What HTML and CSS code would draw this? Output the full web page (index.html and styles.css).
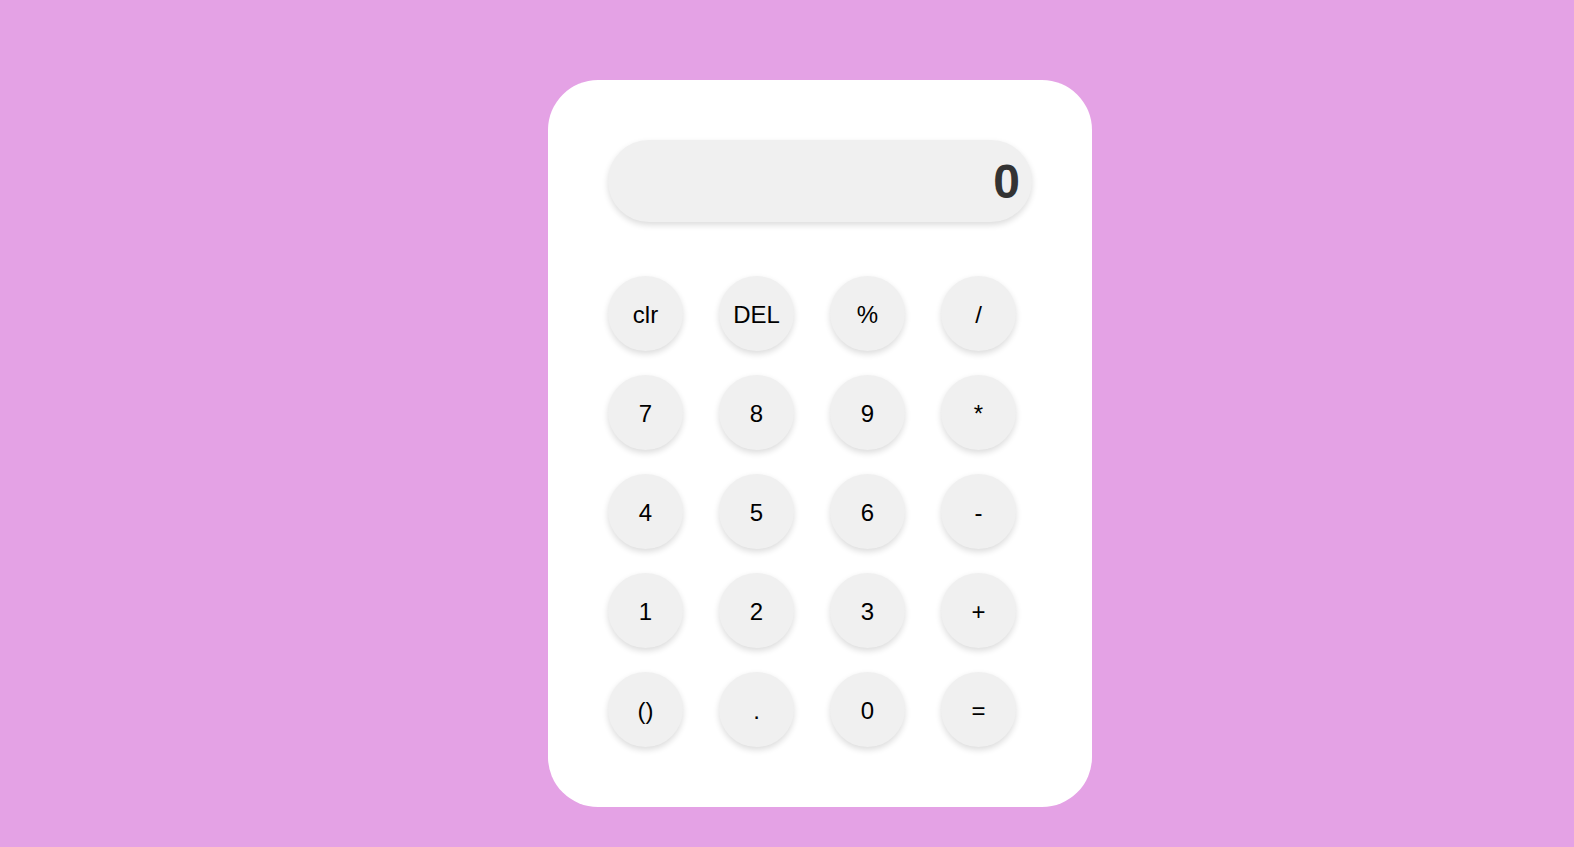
FILE: index.html
```html
<!DOCTYPE html>
<html lang="en">
<head>
<meta charset="utf-8">
<title>Calculator</title>
<link rel="stylesheet" href="styles.css">
</head>
<body>
<main class="page">
  <div class="calculator">
    <div class="display">0</div>
    <div class="keys">
      <button class="key">clr</button>
      <button class="key">DEL</button>
      <button class="key">%</button>
      <button class="key">/</button>
      <button class="key">7</button>
      <button class="key">8</button>
      <button class="key">9</button>
      <button class="key">*</button>
      <button class="key">4</button>
      <button class="key">5</button>
      <button class="key">6</button>
      <button class="key">-</button>
      <button class="key">1</button>
      <button class="key">2</button>
      <button class="key">3</button>
      <button class="key">+</button>
      <button class="key">()</button>
      <button class="key">.</button>
      <button class="key">0</button>
      <button class="key">=</button>
    </div>
  </div>
</main>
</body>
</html>
```

FILE: styles.css
```css
html, body {
  margin: 0;
  padding: 0;
  height: 100%;
}
body {
  background: #e4a2e5;
  font-family: "Liberation Sans", Arial, sans-serif;
  overflow: hidden;
}
.page {
  display: flex;
  justify-content: center;
  align-items: flex-start;
  padding: 80px 0 0 66px;
  box-sizing: border-box;
  height: 100%;
}
.calculator {
  width: 544px;
  box-sizing: border-box;
  padding: 60px;
  background: #ffffff;
  border-radius: 50px;
}
.display {
  height: 82px;
  border-radius: 41px;
  background: #f0f0f0;
  box-shadow: 0 3px 6px rgba(0, 0, 0, 0.14);
  display: flex;
  align-items: center;
  justify-content: flex-end;
  padding: 0 12px;
  font-size: 48px;
  font-weight: bold;
  color: #333333;
}
.keys {
  margin-top: 54px;
  display: grid;
  grid-template-columns: repeat(4, 75px);
  column-gap: 36px;
  row-gap: 24px;
}
.key {
  width: 75px;
  height: 75px;
  border: none;
  border-radius: 50%;
  background: #f0f0f0;
  box-shadow: 0 3px 6px rgba(0, 0, 0, 0.14);
  font-family: "Liberation Sans", Arial, sans-serif;
  font-size: 24px;
  color: #000000;
  padding: 3px 0 0 0;
  display: flex;
  align-items: center;
  justify-content: center;
}
```
